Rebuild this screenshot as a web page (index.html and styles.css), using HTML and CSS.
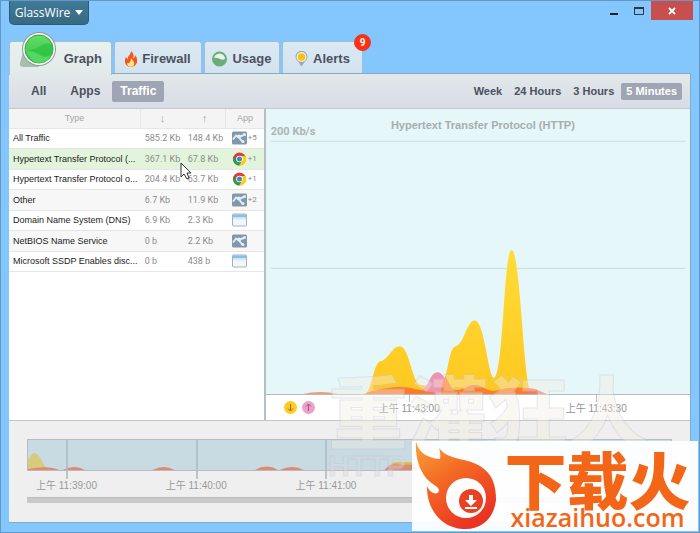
FILE: index.html
```html
<!DOCTYPE html>
<html lang="zh">
<head>
<meta charset="utf-8">
<title>GlassWire</title>
<link rel="stylesheet" href="styles.css">
</head>
<body>
<svg class="defs" aria-hidden="true">
  <symbol id="net" viewBox="0 0 15 13"><rect width="15" height="13" rx="1.500" fill="#8197ab"/><path d="M1 8 4 4l3 2 4 5M8 5l5-2" stroke="#e2eaf0" stroke-width="2" fill="none"/><circle cx="7" cy="5" r="2" fill="#e7eef3"/><circle cx="12.500" cy="3" r="1.500" fill="#e7eef3"/><circle cx="11" cy="10" r="1.500" fill="#e7eef3"/></symbol>
  <symbol id="chrome" viewBox="0 0 14 14"><circle cx="7" cy="7" r="6.500" fill="#e23c2e"/><path d="M1.300 4A6.500 6.500 0 0 0 6.500 13.500L9.800 8.500 7 7 4.200 8.500Z" fill="#2c9c47"/><path d="M7 4h5.800A6.500 6.500 0 0 1 6.500 13.500L9.800 8.500Z" fill="#fbd20b"/><circle cx="7" cy="7" r="3.300" fill="#fff"/><circle cx="7" cy="7" r="2.500" fill="#3f83d8"/></symbol>
  <symbol id="win" viewBox="0 0 15 13"><rect x=".5" y=".5" width="14" height="12" rx="1" fill="#f3f7fa" stroke="#9fb2c3"/><path d="M1 1h13v3H1z" fill="#8cbde4"/><path d="M1 4h13v2H1z" fill="#d8e9f6"/></symbol>
</svg>
<div class="window">
  <header class="titlebar">
    <button class="brand">GlassWire<svg width="8" height="5" viewBox="0 0 8 5"><path d="M0 0h8L4 5z" fill="#fff"/></svg></button>
    <div class="controls">
      <button class="ctl" aria-label="Minimize"><svg width="8" height="12"><path d="M0 8h8v2H0z" fill="#222"/></svg></button>
      <button class="ctl" aria-label="Maximize"><svg width="10" height="8"><path d="M.5 1v6.500h9V1z" fill="none" stroke="#334" /><path d="M0 0h10v2H0z" fill="#334"/></svg></button>
      <button class="ctl close" aria-label="Close"><svg width="8" height="8"><path d="m1 1 6 6m0-6L1 7" stroke="#fff" stroke-width="1.800"/></svg></button>
    </div>
  </header>
  <nav class="tabs">
    <button class="tab active"><svg class="globe" width="38" height="38" viewBox="0 0 38 38"><defs><linearGradient id="g" x2="0" y2="1"><stop stop-color="#66de69"/><stop offset="1" stop-color="#2fc343"/></linearGradient></defs><path d="M6 13 1 31q-1 4 4 4h15z" fill="#a6bfae"/><circle cx="20" cy="17" r="17" fill="#8e9b93"/><circle cx="20" cy="17" r="16" fill="#f7faf7"/><circle cx="20" cy="17" r="14" fill="url(#g)" stroke="#3b9f4a"/><path d="M6 17q8 2 14 6t12 0q-4 8-12 8T6 17" fill="#55d765"/><path d="M7 19q8-1 14-5t12-2q2 6-1 11-6 2-11-1T7 19" fill="#25bd3b" opacity=".55"/></svg>Graph</button>
    <button class="tab firewall"><svg width="12" height="16" viewBox="0 0 12 16"><path d="M6 0c3 3 3 5 2 7 2 0 2-2 2-3 5 6 1 12-4 12S-2 11 1 6c1 1 1 2 2 2C2 5 6 4 6 0" fill="#f4581d"/><path d="M6 7c2 3 4 4 3 7-2 3-7 2-7-2 2 1 4-1 4-5" fill="#ffe28a"/></svg>Firewall</button>
    <button class="tab usage"><svg width="15" height="16" viewBox="0 0 15 16"><circle cx="7.500" cy="8" r="6.500" fill="#e8f3ea" stroke="#68ae76" stroke-width="2"/><path d="M1 7q3-1 7 1t6-1c1 9-13 10-13 0" fill="#68ae76"/></svg>Usage</button>
    <button class="tab alerts"><svg width="13" height="16" viewBox="0 0 13 16"><path d="M6.500 15.500 3.500 11A6 6 0 1 1 9.500 11z" fill="#94a9b0"/><circle cx="6.500" cy="6" r="5" fill="#eef4f4"/><circle cx="6.500" cy="6" r="3.800" fill="#fdc00c"/></svg>Alerts<span class="badge">9</span></button>
  </nav>
  <main class="panel">
    <div class="toolbar">
      <div class="filters"><button>All</button><button>Apps</button><button class="on">Traffic</button></div>
      <div class="ranges"><button>Week</button><button>24 Hours</button><button>3 Hours</button><button class="on">5 Minutes</button></div>
    </div>
    <div class="content">
      <div class="list">
        <table>
          <colgroup><col><col class="c-down"><col class="c-up"><col class="c-app"></colgroup>
          <thead><tr><th>Type</th><th>↓</th><th>↑</th><th>App</th></tr></thead>
          <tbody>
            <tr><td>All Traffic</td><td>585.2 Kb</td><td>148.4 Kb</td><td><svg><use href="#net"/></svg>+5</td></tr>
            <tr class="selected"><td>Hypertext Transfer Protocol (...</td><td>367.1 Kb</td><td>67.8 Kb</td><td><svg><use href="#chrome"/></svg>+1</td></tr>
            <tr><td>Hypertext Transfer Protocol o...</td><td>204.4 Kb</td><td>63.7 Kb</td><td><svg><use href="#chrome"/></svg>+1</td></tr>
            <tr><td>Other</td><td>6.7 Kb</td><td>11.9 Kb</td><td><svg><use href="#net"/></svg>+2</td></tr>
            <tr><td>Domain Name System (DNS)</td><td>6.9 Kb</td><td>2.3 Kb</td><td><svg><use href="#win"/></svg></td></tr>
            <tr><td>NetBIOS Name Service</td><td>0 b</td><td>2.2 Kb</td><td><svg><use href="#net"/></svg></td></tr>
            <tr><td>Microsoft SSDP Enables disc...</td><td>0 b</td><td>438 b</td><td><svg><use href="#win"/></svg></td></tr>
          </tbody>
        </table>
        <svg class="cursor" width="12" height="18" viewBox="0 0 12 18"><path d="M1 1v14l3-3 3 5 2-1-2-5h4z" fill="#fff" stroke="#333"/></svg>
      </div>
      <section class="chart">
        <div class="plot">
          <svg viewBox="266 108 425 287" preserveAspectRatio="none">
            <defs>
              <linearGradient id="y" x2="0" y2="1"><stop stop-color="#ffdc37"/><stop offset="1" stop-color="#ffc820"/></linearGradient>
              <clipPath id="yc"><path d="M365 395C372 393 373 366 380 362C388 362 392 347 400 347C410 347 412 385 421 386C429 386 430 389 435 389C450 389 447 349 456 347C464 346 467 321 475 321C485 321 488 375 494 379C504 379 504 250 512 250C521 250 524 390 532 395Z"/></clipPath>
            </defs>
            <path d="M271 140.500H686M271 268.500H686" stroke="#cbdddc"/>
            <path d="M303 395Q320 391 338 395Z" fill="#f29a78"/>
            <path d="M365 395C372 393 373 366 380 362C388 362 392 347 400 347C410 347 412 385 421 386C429 386 430 389 435 389C450 389 447 349 456 347C464 346 467 321 475 321C485 321 488 375 494 379C504 379 504 250 512 250C521 250 524 390 532 395Z" fill="url(#y)"/>
            <path d="M364 395Q379 389 400 388C412 388 416 391 421 391C430 388 430 373 438 373C445 373 449 391 457 391C465 391 468 386 475 386C483 386 486 392 493 392C500 392 504 389 512 389C532 388 536 391 547 395Z" fill="#ef91b1"/>
            <path clip-path="url(#yc)" d="M364 395Q379 389 400 388C412 388 416 391 421 391L441 395L444 374C448 378 450 391 457 391C465 391 468 386 475 386C483 386 486 392 493 392C500 392 504 389 512 389C532 388 536 391 547 395Z" fill="#fd7b29"/>
            <path d="M528 389C536 389 539 392 547 395H528Z" fill="#f67b59"/>
          </svg>
          <span class="scale">200 Kb/s</span>
          <h2>Hypertext Transfer Protocol (HTTP)</h2>
        </div>
        <div class="axis">
          <div class="legend"><svg width="13" height="13" viewBox="0 0 13 13"><circle cx="6.500" cy="6.500" r="6.500" fill="#fecb25"/><path d="M6.500 3v7M4 7.500 6.500 10 9 7.500" fill="none" stroke="#8c741a"/></svg><svg width="13" height="13" viewBox="0 0 13 13"><circle cx="6.500" cy="6.500" r="6.500" fill="#efa0ca"/><path d="M6.500 10V3M4 5.500 6.500 3 9 5.500" fill="none" stroke="#905c7c"/></svg></div>
          <span>上午 11:43:00</span><span>上午 11:43:30</span>
        </div>
      </section>
    </div>
    <section class="timeline">
      <div class="overview"><svg viewBox="27 440 646 31" preserveAspectRatio="none">
        <path d="M27 471V461C31 452 35 450 40 460Q44 468 47 471Z" fill="#d7cb7c"/>
        <path d="M27 471V470Q48 466 58 471ZM62 471Q74 465 84 471ZM152 471Q164 465 174 471ZM255 471Q267 464 278 471ZM280 471Q293 465 304 471ZM385 471Q391 464 396 464H425V471Z" fill="#dd8974"/>
        <path d="M391 465Q394 463 398 463H425V466Z" fill="#dfba45"/>
      </svg></div>
      <div class="ticks"><span>上午 11:39:00</span><span>上午 11:40:00</span><span>上午 11:41:00</span></div>
      <div class="scroll"></div>
    </section>
  </main>
  <div class="watermark"><b>重灌狂人</b><small>HTTP</small></div>
  <div class="sitelogo">
    <svg width="85" height="90" viewBox="412 441 85 90"><defs><linearGradient id="f" x2=".6" y2="1"><stop stop-color="#faa336"/><stop offset=".45" stop-color="#f46a25"/><stop offset="1" stop-color="#e93422"/></linearGradient></defs><path fill="url(#f)" fill-rule="evenodd" d="M416 442C419 452 426 458 440 459Q441 454 439 448C449 461 465 457 480 466C493 474 496 486 496 500C494 518 482 530 463 529C441 528 426 508 427 486C430 493 437 496 439 491C440 487 432 485 426 478C419 469 415 456 416 442ZM466 478A20 20 0 1 0 466 518A20 20 0 1 0 466 478Z"/><circle cx="471" cy="501" r="12" fill="#eb4024"/><path d="M469 495h4v5h4l-6 6-6-6h4zM465 507h12v2h-12z" fill="#fff"/></svg>
    <div class="sitename"><strong>下载火</strong><span>xiazaihuo.com</span></div>
  </div>
</div>
</body>
</html>
```
FILE: styles.css
```css
* { box-sizing: border-box; }
body { margin: 0; font-family: "Liberation Sans", "Noto Sans CJK SC", sans-serif; color: #4b5160; }
button { font: inherit; color: inherit; border: 0; background: none; padding: 0; }
.defs { position: absolute; width: 0; height: 0; }
.window { position: relative; display: flex; flex-direction: column; min-height: 100vh; padding: 0 8px 9px; background: #84c6fe; border: 1px solid #6297c6; overflow: hidden; }
.titlebar { display: flex; justify-content: space-between; align-items: flex-start; height: 40px; }
.brand { height: 24px; width: 80px; display: flex; align-items: center; justify-content: center; gap: 5px; color: #fff; font: 12px "Open Sans", sans-serif; background: linear-gradient(#417b97, #376982); border: 1px solid #2f5a74; border-top: 0; border-radius: 0 0 5px 5px; }
.controls { display: flex; margin-right: -2px; }
.ctl { width: 25px; height: 19px; display: flex; align-items: center; justify-content: center; }
.ctl.close { width: 42px; background: #c84f50; }
.tabs { display: flex; gap: 2px; height: 32px; }
.tab { position: relative; display: flex; align-items: center; justify-content: center; gap: 5px; height: 32px; padding: 2px 0 0; font-size: 13px; font-weight: bold; background: linear-gradient(#dce9f3, #d3e3ee); border: 1px solid #a0bfd5; border-bottom: 0; border-radius: 3px 3px 0 0; }
.tab.active { z-index: 1; height: 34px; width: 103px; padding: 0 9px; justify-content: flex-end; background: linear-gradient(#e9f1ef, #e3eaea); }
.tab.active .globe { position: absolute; left: 9px; top: -10px; }
.firewall { width: 88px; }
.usage { width: 76px; }
.alerts { width: 81px; }
.badge { position: absolute; top: -8px; right: -9px; width: 17px; height: 17px; border-radius: 50%; background: #ff3011; border: 1px solid #df3b30; color: #fff; font: bold 10px/15px "Liberation Sans Narrow", Roboto, sans-serif; text-align: center; }
.panel { flex: 1; display: flex; flex-direction: column; background: #fff; border: 1px solid #84aaca; border-width: 1px 1px 1px 0; }
.toolbar { display: flex; justify-content: space-between; align-items: center; height: 35px; padding: 0 8px 0 14px; font-size: 12px; font-weight: bold; background: linear-gradient(#e3e8ea, #d8dce6); border-bottom: 1px solid #c4c8cc; }
.filters, .ranges { display: flex; align-items: center; gap: 8px; }
.toolbar button { height: 21px; padding: 0 8px; border-radius: 2px; }
.filters { gap: 4px; }
.filters button:first-child { margin-right: 4px; }
.ranges { font-size: 11px; gap: 2px; }
.ranges button { height: 17px; padding: 0 5px; }
.toolbar .on { color: #fff; background: #a0a5b3; }
.content { flex: 1; display: flex; border-bottom: 1px solid #c6c6c6; }
.list { position: relative; flex: 0 0 37.7%; border-right: 2px solid #b4c0c4; }
table { width: 100%; height: 163px; border-collapse: collapse; table-layout: fixed; white-space: nowrap; }
.c-down { width: 43px; } .c-up { width: 42px; } .c-app { width: 38px; }
th { height: 19px; padding: 0; background: #f4f4f4; color: #a6a6a6; font-size: 9px; font-weight: normal; }
th:nth-child(2), th:nth-child(4) { border-left: 1px solid #e6e6e6; }
th:nth-child(2), th:nth-child(3) { font-size: 11px; }
td { padding: 0 0 0 4px; border-top: 1px solid #e6e6e6; color: #222; font-size: 9px; line-height: 12px; }
tbody tr:nth-child(even) { background: #f7f7f7; }
tbody tr:last-child { border-bottom: 1px solid #e6e6e6; }
tbody tr.selected { background: #e2f4db; }
td:nth-child(n+2) { color: #8c8c8c; font-family: Roboto, sans-serif; font-size: 8px; }
td:nth-child(2), td:nth-child(3) { font-size: 9px; }
td:nth-child(4) { padding-left: 6px; }
td svg { width: 15px; height: 14px; vertical-align: middle; margin-right: 1px; }
.cursor { position: absolute; left: 171px; top: 53px; }
.chart { flex: 1; display: flex; flex-direction: column; }
.plot { position: relative; flex: 1; background: #e6f7f9; border-bottom: 1px solid #b9b9b9; }
.plot > svg { position: absolute; width: 100%; height: 100%; }
.plot h2 { position: relative; margin: 0; padding: 9px 0 0 10px; text-align: center; font-size: 11px; line-height: 15px; color: #a5aeae; }
.scale { position: absolute; left: 5px; top: 14px; color: #abb4b4; font: bold 11px/18px Roboto, sans-serif; }
.axis { display: flex; align-items: center; height: 25px; padding-left: 18px; font-size: 10px; color: #939393; }
.legend { display: flex; gap: 5px; width: 95px; }
.axis span { position: relative; width: 187px; white-space: nowrap; }
.axis span::before { content: ""; position: absolute; left: 30px; top: -5px; height: 7px; border-left: 1px solid #bbb; }
.axis span:last-child { width: 60px; }
.timeline { height: 101px; padding: 18px 18px 0; background: #efefef; }
.overview { height: 32px; background: #c8dae2; border: 1px solid #bbb; }
.overview svg { display: block; width: 100%; height: 100%; }
.ticks { display: grid; grid-template-columns: repeat(3, 20%); height: 26px; padding-left: 9px; font-size: 10px; line-height: 30px; color: #999; }
.ticks span { position: relative; white-space: nowrap; }
.ticks span::before { content: ""; position: absolute; left: 30px; top: -31px; height: 39px; border-left: 2px solid #acbcc3; opacity: .8; }
.scroll { height: 6px; background: #c9c9c9; border-top: 1px solid #bcbcbc; }
.watermark { position: absolute; left: 327px; bottom: 48px; display: flex; flex-direction: column; color: #f2eee2; opacity: .4; -webkit-text-stroke: 1px #c3c6d2; pointer-events: none; }
.watermark b { font: 900 80px/80px "Noto Sans CJK TC", sans-serif; }
.watermark small { font: bold 30px/36px "Liberation Sans", sans-serif; color: #d5dcdf; }
.ticks { grid-template-columns: repeat(3, 20.4%); }
.sitelogo { position: absolute; right: 1px; bottom: 1px; display: flex; width: 286px; height: 90px; background: #fffffff0; color: #f36618; }
.sitename { flex: 1; display: flex; flex-direction: column; align-items: center; }
.sitename strong { font: 900 62px/62px "Noto Sans CJK SC", sans-serif; padding-top: 6px; }
.sitename span { font: 600 25px/24px "Open Sans", sans-serif; margin-top: -4px; }
```
